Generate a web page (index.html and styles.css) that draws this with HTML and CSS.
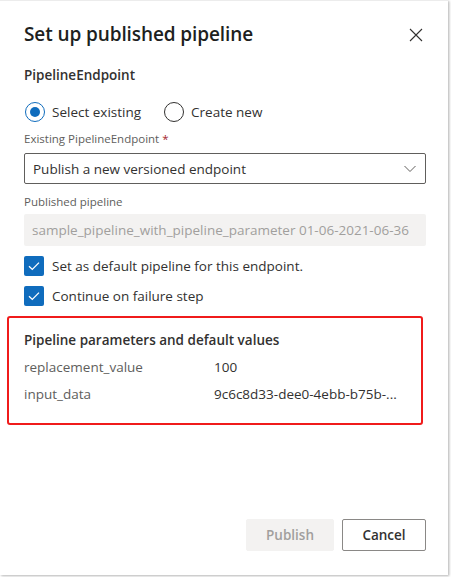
FILE: index.html
```html
<!DOCTYPE html>
<html>
<head>
<meta charset="utf-8">
<link rel="stylesheet" href="styles.css">
</head>
<body>
<div class="dialog">
  <div class="header">
    <h1 class="title">Set up published pipeline</h1>
    <button class="close" aria-label="Close">
      <svg width="14" height="14" viewBox="0 0 14 14"><path d="M1 1L13 13M13 1L1 13" stroke="#323130" stroke-width="1.1" fill="none"/></svg>
    </button>
  </div>
  <div class="body">
    <div class="section-label">PipelineEndpoint</div>
    <div class="radios">
      <label class="radio"><span class="circle checked"></span>Select existing</label>
      <label class="radio"><span class="circle"></span>Create new</label>
    </div>
    <div class="field-label">Existing PipelineEndpoint <span class="req">*</span></div>
    <div class="dropdown">
      <span>Publish a new versioned endpoint</span>
      <svg width="12" height="8" viewBox="0 0 12 8"><path d="M0.5 1L6 6.5L11.5 1" stroke="#605e5c" stroke-width="1" fill="none"/></svg>
    </div>
    <div class="field-label lbl2">Published pipeline</div>
    <div class="textfield">sample_pipeline_with_pipeline_parameter 01-06-2021-06-36</div>
    <div class="check first"><span class="box"><svg width="12" height="10" viewBox="0 0 12 10"><path d="M1 5.2L4.3 8.4L11 1.6" stroke="#fff" stroke-width="1.3" fill="none"/></svg></span>Set as default pipeline for this endpoint.</div>
    <div class="check"><span class="box"><svg width="12" height="10" viewBox="0 0 12 10"><path d="M1 5.2L4.3 8.4L11 1.6" stroke="#fff" stroke-width="1.3" fill="none"/></svg></span>Continue on failure step</div>
    <div class="params">
      <div class="params-title">Pipeline parameters and default values</div>
      <div class="param-row"><span class="pname">replacement_value</span><span class="pval">100</span></div>
      <div class="param-row"><span class="pname">input_data</span><span class="pval">9c6c8d33-dee0-4ebb-b75b-...</span></div>
    </div>
  </div>
  <div class="footer">
    <button class="btn disabled">Publish</button>
    <button class="btn default">Cancel</button>
  </div>
</div>
</body>
</html>
```
FILE: styles.css
```css
* { box-sizing: border-box; }
html, body { margin: 0; padding: 0; background: #ffffff; }
body {
  font-family: "Open Sans", "Noto Sans", sans-serif;
  color: #323130;
  width: 451px;
  height: 577px;
  overflow: hidden;
}
.dialog {
  width: 448px;
  height: 575px;
  background: #fff;
  border-top: 1px solid #ececec;
  box-shadow: 1px 1px 2px rgba(0,0,0,0.22), 2px 1px 3px rgba(0,0,0,0.08);
  display: flex;
  flex-direction: column;
  position: relative;
}
.header {
  display: flex;
  justify-content: space-between;
  align-items: center;
  padding: 17px 20px 0 24px;
  height: 48px;
}
.title {
  margin: 0;
  font-size: 19px;
  font-weight: 600;
  letter-spacing: -0.1px;
  color: #201f1e;
}
.close {
  border: 0;
  background: transparent;
  padding: 0;
  width: 14px;
  height: 14px;
  margin-right: 5px;
  margin-top: 3px;
  display: flex;
}
.body {
  padding: 0 22px 0 24px;
  flex: 1;
  display: flex;
  flex-direction: column;
}
.section-label {
  margin-top: 16px;
  font-size: 13.5px;
  font-weight: 600;
  line-height: 20px;
}
.radios {
  display: flex;
  gap: 22px;
  margin-top: 17px;
  height: 20px;
  align-items: center;
}
.radio {
  display: flex;
  align-items: center;
  font-size: 13.5px;
  gap: 7px;
}
.circle {
  width: 20px;
  height: 20px;
  border-radius: 50%;
  border: 1px solid #323130;
  margin-left: 1px;
  display: inline-block;
  position: relative;
}
.circle.checked { border-color: #0f6cbd; }
.circle.checked::after {
  content: "";
  position: absolute;
  left: 4px; top: 4px;
  width: 10px; height: 10px;
  border-radius: 50%;
  background: #0f6cbd;
}
.field-label {
  margin-top: 9px;
  font-size: 11.5px;
  color: #605e5c;
  line-height: 16px;
}
.field-label .req { color: #a4262c; }
.dropdown {
  margin-top: 6px;
  height: 31px;
  border: 1px solid #605e5c;
  border-radius: 2px;
  display: flex;
  align-items: center;
  justify-content: space-between;
  padding: 0 9px 0 8px;
  font-size: 13.5px;
  color: #323130;
}
.lbl2 { margin-top: 10px; }
.textfield {
  margin-top: 4px;
  height: 32px;
  background: #f3f2f1;
  border-radius: 2px;
  display: flex;
  align-items: center;
  padding-left: 8px;
  font-size: 13.5px;
  color: #a19f9d;
  white-space: nowrap;
}
.check {
  display: flex;
  align-items: center;
  gap: 8px;
  font-size: 13.5px;
  height: 20px;
  margin-top: 10px;
}
.check.first { margin-top: 10px; }
.box {
  width: 20px;
  height: 20px;
  background: #0f6cbd;
  border-radius: 2px;
  display: flex;
  align-items: center;
  justify-content: center;
}
.params {
  margin: 10px 3px 0 -17px;
  border: 2px solid #f01b1b;
  border-radius: 3px;
  padding: 12px 15px 18px 15px;
  height: 109px;
}
.params-title {
  font-size: 13.5px;
  font-weight: 600;
  line-height: 20px;
}
.param-row {
  display: flex;
  font-size: 13.5px;
  line-height: 20px;
  margin-top: 7px;
}
.pname { width: 190px; color: #605e5c; }
.pval { color: #323130; }
.footer {
  display: flex;
  justify-content: flex-end;
  gap: 8px;
  padding: 0 22px 24px 0;
}
.btn {
  font-family: inherit;
  font-size: 13.5px;
  font-weight: 600;
  height: 32px;
  border-radius: 2px;
  padding: 0;
}
.btn.disabled {
  width: 88px;
  background: #f3f2f1;
  border: 1px solid #f3f2f1;
  color: #a19f9d;
}
.btn.default {
  width: 84px;
  background: #fff;
  border: 1px solid #8a8886;
  color: #323130;
}
```
